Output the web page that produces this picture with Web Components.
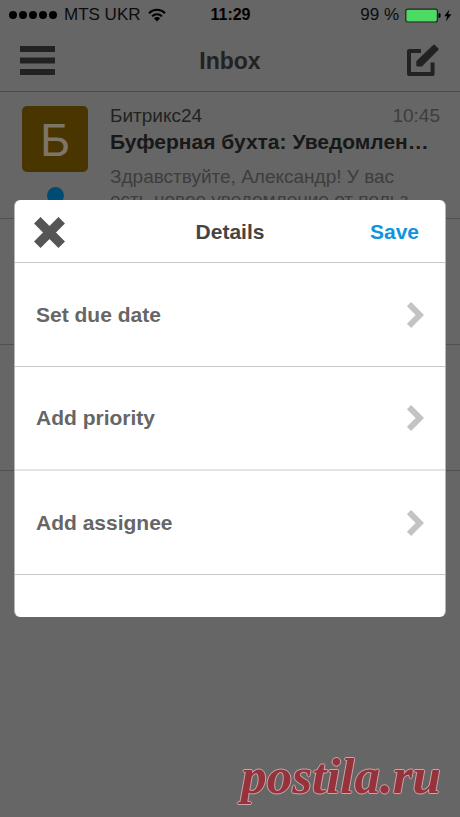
<!DOCTYPE html>
<html lang="en">
<head>
<meta charset="utf-8">
<meta name="viewport" content="width=device-width, initial-scale=1">
<title>Inbox</title>
<style>
html,body{margin:0;min-height:100%;background:#666}
body{font-family:"Liberation Sans",Arial,sans-serif}
</style>
</head>
<body>
<mail-app></mail-app>
<script>
const define = (name, html) => {
  const t = document.createElement('template');
  t.innerHTML = html;
  customElements.define(name, class extends HTMLElement {
    constructor() {
      super();
      this.attachShadow({mode: 'open'}).append(t.content.cloneNode(true));
    }
  });
};

define('status-bar', `
<style>
:host{display:grid;grid-template-columns:1fr auto 1fr;align-items:center;height:30px;padding:0 8px 0 9px;font-size:17px;line-height:30px;color:#0c0c0c}
.left,.right{display:flex;align-items:center}
.left{gap:6px}
.right{justify-content:flex-end;gap:6px}
b{font-size:16px;color:#000}
svg{display:block}
</style>
<div class="left">
<svg width="49" height="10" viewBox="0 0 49 10" fill="#000"><circle cx="4" cy="5" r="4"/><circle cx="14" cy="5" r="4"/><circle cx="24" cy="5" r="4"/><circle cx="34" cy="5" r="4"/><circle cx="44" cy="5" r="4"/></svg>
<span>MTS UKR</span>
<svg width="20" height="14" viewBox="0 0 20 14" fill="none" stroke="#000" stroke-width="2"><path d="M2 5.2a11.2 11.2 0 0 1 16 0M5 8.4a7 7 0 0 1 10 0"/><path d="M10 13.4 6.9 10.3a4.4 4.4 0 0 1 6.2 0z" fill="#000" stroke="none"/></svg>
</div>
<b>11:29</b>
<div class="right">
<span>99 %</span>
<svg width="47" height="15" viewBox="0 0 47 15"><rect x=".8" y="1.2" width="31.6" height="12.8" rx="2" fill="#4cd964" stroke="#222" stroke-width="1.2"/><path d="M33.5 5.2h1q1 0 1 1v2.6q0 1-1 1h-1z" fill="#000"/><path d="m44.4 1.4-5.2 6.8h3l-1.4 5.4 5.6-7.4h-3.2z" fill="#000"/></svg>
</div>`);

define('nav-bar', `
<style>
:host{display:grid;grid-template-columns:1fr auto 1fr;align-items:center;height:61px;padding:0 20px;border-bottom:1px solid #4c4c4c}
h1{margin:0;font-size:23px;line-height:28px;color:#222}
button{border:0;padding:0;background:none;display:block;color:#222}
button:last-child{justify-self:end}
svg{display:block}
</style>
<button aria-label="Menu"><svg width="35" height="30" viewBox="0 0 35 30" fill="currentColor"><path d="M0 0h35v6H0zM0 11.5h35v6H0zM0 23h35v6H0z"/></svg></button>
<h1><slot></slot></h1>
<button aria-label="Compose"><svg width="34" height="34" viewBox="0 0 34 34"><path d="M15 7H3v23h23.6V18.5" fill="none" stroke="currentColor" stroke-width="4" stroke-linejoin="round"/><path d="M11.5 17.5v3.8h3.8L31.4 5.2 28 1.8z" fill="currentColor" stroke="currentColor" stroke-width="2.4" stroke-linejoin="round"/></svg></button>`);

define('mail-item', `
<style>
:host{display:flex;gap:22px;box-sizing:border-box;height:127px;padding:14px 20px 0 22px;border-bottom:1px solid #505050;overflow:hidden}
.side{display:flex;flex-direction:column;align-items:center;gap:15px}
.avatar{width:66px;height:66px;border-radius:5px;background:#493500;color:#7d7566;font-size:46px;line-height:68px;text-align:center}
.dot{width:17px;height:17px;border-radius:50%;background:#004b73}
.body{flex:1;min-width:0}
.top{display:flex;justify-content:space-between;font-size:19px;line-height:20px;color:#222}
time{color:#3d3d3d}
h2{margin:4px 0 0;font-size:21px;line-height:24px;color:#181818;white-space:nowrap}
p{margin:11px 0 0;font-size:19px;line-height:23px;color:#3d3d3d;white-space:nowrap}
</style>
<div class="side"><div class="avatar">Б</div><div class="dot"></div></div>
<div class="body">
<div class="top"><slot name="from"></slot><time><slot name="time"></slot></time></div>
<h2><slot name="subject"></slot></h2>
<p><slot></slot></p>
</div>`);

define('empty-item', `
<style>:host{display:block;box-sizing:border-box;height:126px;border-bottom:1px solid #505050}</style>`);

define('option-row', `
<style>
:host{display:block}
button{display:flex;justify-content:space-between;align-items:center;box-sizing:border-box;width:100%;height:104px;padding:0 21px;border:0;border-bottom:1px solid #c8c8c8;background:none;font:bold 21px/26px "Liberation Sans",Arial,sans-serif;color:#666;text-align:left}
:host([soft]) button{border-bottom:2px solid #e4e4e4}
svg{display:block}
</style>
<button><slot></slot><svg width="18" height="26" viewBox="0 0 18 26"><path d="M3 2.2 13.8 13 3 23.8" fill="none" stroke="#c3c3c3" stroke-width="6"/></svg></button>`);

define('details-dialog', `
<style>
:host{display:block;box-sizing:border-box;padding-bottom:42px;border:solid #b4b4b4;border-width:0 1px;border-radius:6px;background:#fff;overflow:hidden}
header{display:grid;grid-template-columns:1fr auto 1fr;align-items:center;box-sizing:border-box;height:63px;padding:2px 19px 0;border-bottom:1px solid #c8c8c8}
h2{margin:0;font-size:21px;line-height:26px;color:#444}
button{border:0;padding:0;background:none;font:bold 21px/26px "Liberation Sans",Arial,sans-serif;color:#0f94e0}
button:first-child{justify-self:start}
button:last-child{justify-self:end;padding-right:7px}
svg{display:block}
</style>
<header>
<button aria-label="Close"><svg width="31" height="31" viewBox="0 0 31 31"><path d="m3.3 3.3 24.4 24.4M27.7 3.3 3.3 27.7" stroke="#555" stroke-width="9.2"/></svg></button>
<h2>Details</h2>
<button>Save</button>
</header>
<slot></slot>`);

define('site-mark', `
<style>
:host{display:block;font:italic bold 51px/60px "Liberation Serif","Times New Roman",serif;color:#96323b;text-shadow:1px 0 #c9a3a6,-1px 0 #c9a3a6,0 1px #c9a3a6,0 -1px #c9a3a6}
</style><slot></slot>`);

define('mail-app', `
<style>
:host{display:block;position:relative;box-sizing:border-box;min-height:100vh;background:#666}
details-dialog{position:absolute;top:200px;left:14px;right:14px}
site-mark{position:absolute;right:19px;bottom:11px}
</style>
<status-bar></status-bar>
<nav-bar>Inbox</nav-bar>
<mail-item><span slot="from">Битрикс24</span><span slot="time">10:45</span><span slot="subject">Буферная бухта: Уведомлен…</span>Здравствуйте, Александр! У вас<br>есть новое уведомление от польз</mail-item>
<empty-item></empty-item>
<empty-item></empty-item>
<details-dialog>
<option-row>Set due date</option-row>
<option-row soft>Add priority</option-row>
<option-row>Add assignee</option-row>
</details-dialog>
<site-mark>postila.ru</site-mark>`);
</script>
</body>
</html>
